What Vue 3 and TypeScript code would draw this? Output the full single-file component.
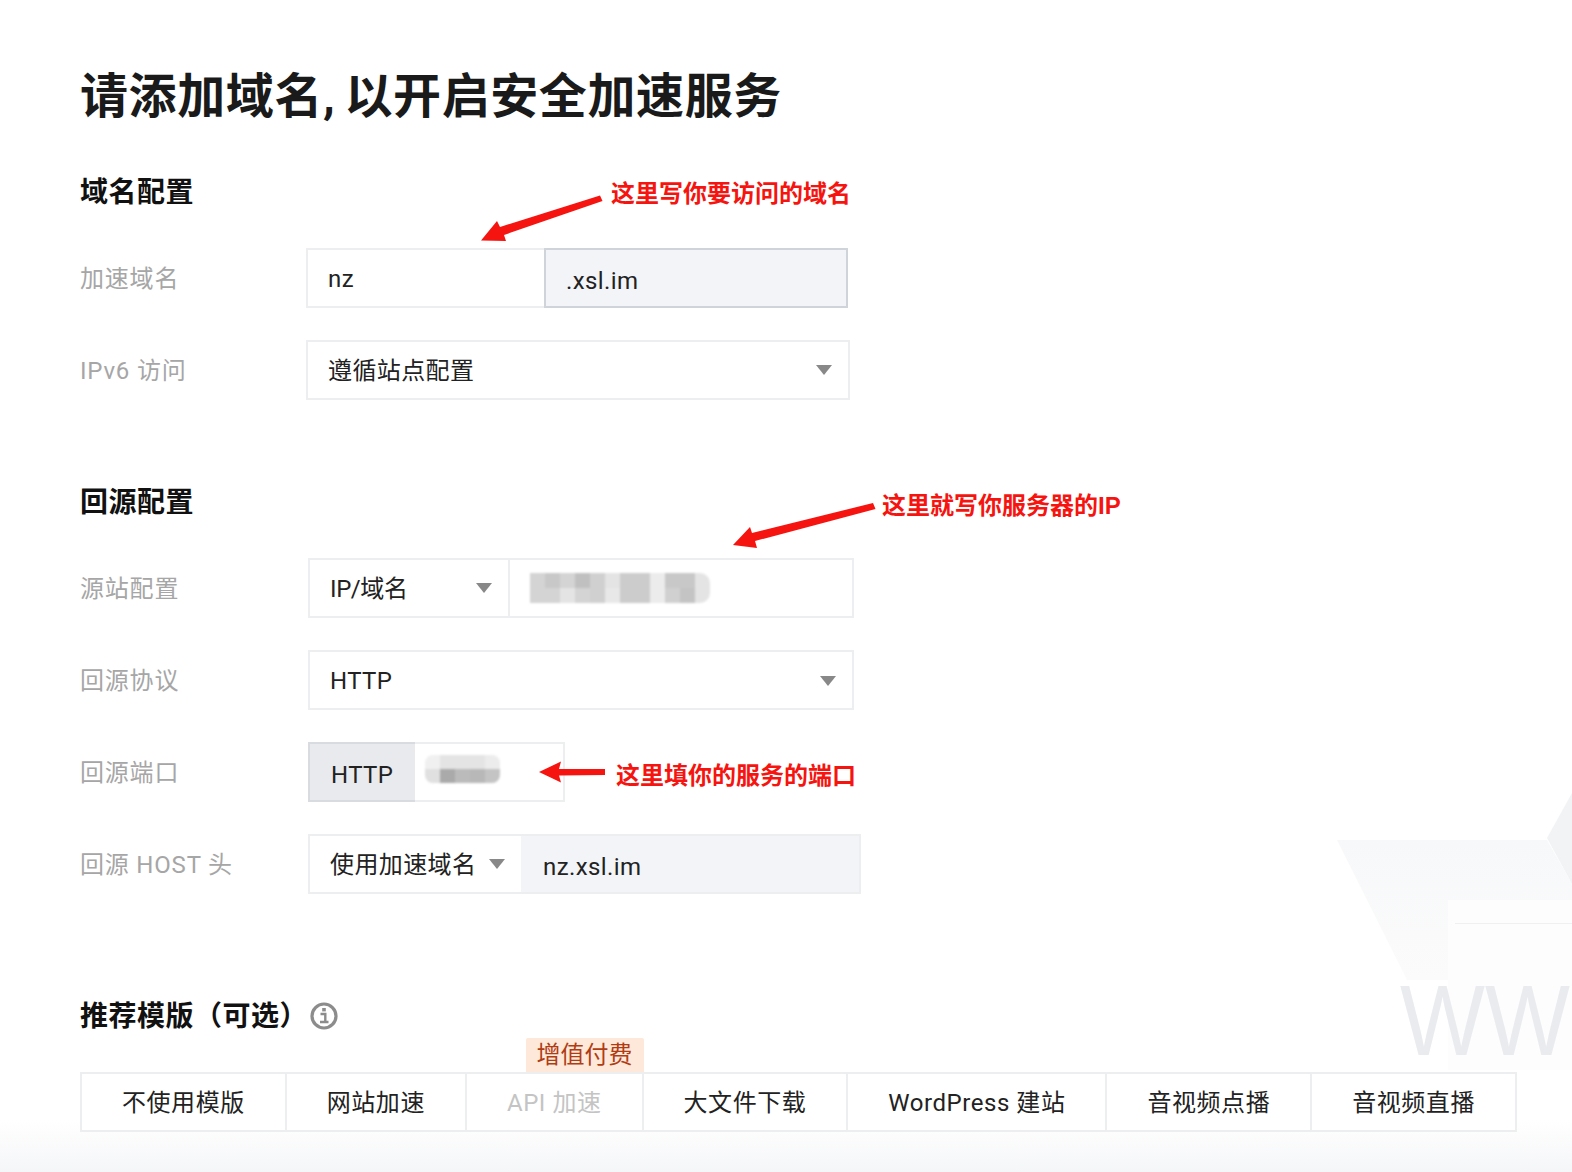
<script setup lang="ts">
interface Tab {
  label: string;
  disabled?: boolean;
  tag?: string;
}

const tabs: Tab[] = [
  { label: '不使用模版' },
  { label: '网站加速' },
  { label: 'API 加速', disabled: true, tag: '增值付费' },
  { label: '大文件下载' },
  { label: 'WordPress 建站' },
  { label: '音视频点播' },
  { label: '音视频直播' }
];

// pixelated host value, grey level per cell
const hostCells = [
  212, 200, 212, 192, 208, 228, 204, 204, 236, 200, 200, 228,
  212, 212, 228, 212, 208, 232, 204, 204, 236, 208, 196, 228
];
const portCells = [240, 228, 228, 228, 236, 224, 170, 187, 184, 196];

const cellColor = (v: number) => `rgb(${v}, ${v}, ${v})`;
</script>

<template>
  <div class="page">
    <svg class="backdrop" width="1572" height="1172" viewBox="0 0 1572 1172" aria-hidden="true">
      <defs>
        <linearGradient id="floor" x1="0" y1="0" x2="0" y2="1">
          <stop offset="0" stop-color="#f5f6f8" stop-opacity="0" />
          <stop offset="1" stop-color="#f5f6f8" />
        </linearGradient>
        <linearGradient id="fade" x1="0" y1="0" x2="0" y2="1">
          <stop offset="0" stop-color="#f7f8f9" />
          <stop offset="1" stop-color="#fbfbfc" />
        </linearGradient>
      </defs>
      <polygon points="1337,840 1547,840 1572,884 1572,980 1407,980" fill="url(#fade)" />
      <polygon points="1547,838 1572,793 1572,884" fill="#f2f3f5" />
      <rect x="1448" y="900" width="124" height="170" fill="#fdfdfe" />
      <rect x="1455" y="923" width="117" height="1" fill="#eef0f2" />
      <text class="www" transform="translate(1400 1055) scale(1 1.12)">WW</text>
      <rect x="0" y="1120" width="1572" height="52" fill="url(#floor)" />
    </svg>

    <main class="content">
      <h1 class="title">请添加域名, 以开启安全加速服务</h1>

      <section class="section">
        <h2 class="section-title">域名配置</h2>
        <div class="row">
          <label class="label">加速域名</label>
          <div class="field w-domain">
            <span class="cell grow-domain">nz</span>
            <span class="cell addon boxed">.xsl.im</span>
          </div>
        </div>
        <div class="row">
          <label class="label">IPv6 访问</label>
          <div class="field w-ipv6">
            <span class="cell select">遵循站点配置<i class="caret"></i></span>
          </div>
        </div>
      </section>

      <section class="section second">
        <h2 class="section-title">回源配置</h2>
        <div class="row">
          <label class="label">源站配置</label>
          <div class="field w-origin">
            <span class="cell select type-select">IP/域名<i class="caret"></i></span>
            <span class="cell mosaic-cell">
              <span class="mosaic host">
                <i v-for="(v, i) in hostCells" :key="i" :style="{ background: cellColor(v) }"></i>
              </span>
            </span>
          </div>
        </div>
        <div class="row">
          <label class="label">回源协议</label>
          <div class="field w-proto">
            <span class="cell select latin">HTTP<i class="caret"></i></span>
          </div>
        </div>
        <div class="row">
          <label class="label">回源端口</label>
          <div class="field w-port">
            <span class="cell prefix">HTTP</span>
            <span class="cell mosaic-cell port-cell">
              <span class="mosaic port">
                <i v-for="(v, i) in portCells" :key="i" :style="{ background: cellColor(v) }"></i>
              </span>
            </span>
          </div>
        </div>
        <div class="row">
          <label class="label">回源 HOST 头</label>
          <div class="field w-host">
            <span class="cell select host-select">使用加速域名<i class="caret"></i></span>
            <span class="cell addon host-value">nz.xsl.im</span>
          </div>
        </div>
      </section>

      <section class="section third">
        <h2 class="section-title">
          推荐模版（可选）
          <svg class="info" width="28" height="28" viewBox="0 0 28 28" aria-hidden="true">
            <circle cx="14" cy="14" r="12" fill="none" stroke="#8c8c8c" stroke-width="3.2" />
            <rect x="12.2" y="6" width="3.6" height="3.4" fill="#8c8c8c" />
            <path d="M10.5 12h4.8v7.5M10 20h8.5" fill="none" stroke="#8c8c8c" stroke-width="2.4" />
          </svg>
        </h2>
        <div class="tabs">
          <div v-for="tab in tabs" :key="tab.label" class="tab" :class="{ disabled: tab.disabled }">
            {{ tab.label }}
            <span v-if="tab.tag" class="tag">{{ tab.tag }}</span>
          </div>
        </div>
      </section>
    </main>

    <!-- red hand-drawn notes on top of the screenshot -->
    <div class="note note-domain">这里写你要访问的域名</div>
    <div class="note note-ip">这里就写你服务器的IP</div>
    <div class="note note-port">这里填你的服务的端口</div>
    <svg class="arrows" width="1572" height="1172" viewBox="0 0 1572 1172" aria-hidden="true">
      <path d="M600 195.5 L602.5 201 L504 235 L506 241 L481 240.5 L497 221 L500 227 Z" fill="#f5140f" />
      <path d="M873 503 L875.5 509 L755 541 L757 548 L733 545 L750 527 L752 533 Z" fill="#f5140f" />
      <path d="M605 769 V775 L559 775.5 L561 782.5 L539 772 L561 761.5 L559 769 Z" fill="#f5140f" />
    </svg>
  </div>
</template>

<style>
html,
body {
  margin: 0;
  background: #fff;
}
</style>

<style scoped>
.page {
  position: relative;
  width: 1572px;
  height: 1172px;
  overflow: hidden;
  background: #fff;
  color: #1f1f1f;
  font-family: Roboto, "Noto Sans CJK SC", sans-serif;
}

.backdrop,
.arrows {
  position: absolute;
  left: 0;
  top: 0;
}

.arrows {
  pointer-events: none;
}

.www {
  font-family: "Liberation Sans", sans-serif;
  font-size: 90px;
  fill: #e9ebee;
}

.content {
  position: relative;
  padding: 63px 57px 0 80px;
}

.title {
  margin: 0;
  font-size: 48px;
  line-height: 68px;
  font-weight: 700;
  color: #1a1a1a;
  letter-spacing: 0.6px;
  word-spacing: -3.5px;
}

.section {
  margin-top: 42px;
}

.section.second {
  margin-top: 83px;
}

.section.third {
  margin-top: 103px;
}

.section-title {
  display: flex;
  align-items: center;
  margin: 0 0 35px;
  font-size: 28px;
  line-height: 40px;
  font-weight: 700;
  letter-spacing: 0.5px;
  color: #111;
}

.info {
  margin: 0 0 3px 2px;
}

.row {
  display: flex;
  align-items: center;
  margin-bottom: 32px;
}

.row:last-child {
  margin-bottom: 0;
}

.label {
  width: 226px;
  flex: none;
  padding-bottom: 3px;
  font-size: 24px;
  letter-spacing: 0.8px;
  color: #a6a6a6;
}

.second .label {
  width: 228px;
}

.field {
  display: flex;
  box-sizing: border-box;
  height: 60px;
  border: 2px solid #eceef0;
  background: #fff;
  font-size: 24px;
  letter-spacing: 0.4px;
  color: #222;
}

.w-domain { width: 542px; }
.w-ipv6 { width: 544px; }
.w-origin { width: 546px; }
.w-proto { width: 546px; }
.w-port { width: 257px; }
.w-host { width: 553px; }

.cell {
  display: flex;
  align-items: center;
  box-sizing: border-box;
  padding: 0 20px;
}

.grow-domain {
  width: 236px;
  padding-top: 1px;
}

.addon {
  flex: 1;
  background: #f2f4f8;
  padding-top: 5px;
}

.host-value {
  padding-left: 22px;
}

.boxed {
  margin: -2px -2px -2px 0;
  border: 2px solid #cfd4da;
  padding-left: 20px;
}

.select {
  flex: 1;
  justify-content: space-between;
  padding-right: 16px;
  padding-bottom: 3px;
}

.latin {
  padding-top: 2px;
  padding-bottom: 0;
}

.type-select {
  flex: none;
  width: 200px;
  letter-spacing: -0.4px;
  border-right: 2px solid #eceef0;
}

.host-select {
  flex: none;
  width: 211px;
}

.caret {
  width: 0;
  height: 0;
  margin-top: 3px;
  border-left: 8px solid transparent;
  border-right: 8px solid transparent;
  border-top: 10px solid #888;
}

.latin .caret {
  margin-top: 0;
}

.prefix {
  width: 107px;
  margin: -2px 0 -2px -2px;
  padding-left: 21px;
  padding-top: 5px;
  background: #e8eaee;
  border: solid #d8dbe0;
  border-width: 2px 0 2px 2px;
}

.mosaic-cell {
  padding-left: 20px;
}

.port-cell {
  padding: 11px 0 0 10px;
  align-items: flex-start;
}

.mosaic {
  display: grid;
  filter: blur(0.8px);
}

.mosaic i {
  display: block;
}

.host {
  grid-template-columns: repeat(12, 15px);
  grid-auto-rows: 15px;
  border-radius: 0 10px 10px 0;
  overflow: hidden;
}

.port {
  grid-template-columns: repeat(5, 15px);
  grid-auto-rows: 14px;
  border-radius: 8px;
  overflow: hidden;
}

.tabs {
  display: flex;
  width: max-content;
  border: 2px solid #eceef0;
  background: #fff;
}

.tab {
  position: relative;
  box-sizing: border-box;
  height: 56px;
  padding: 0 40px;
  font-size: 24px;
  letter-spacing: 0.55px;
  line-height: 58px;
  color: #222;
  border-right: 2px solid #eceef0;
  white-space: nowrap;
}

.tab:last-child {
  border-right: 0;
}

.tab.disabled {
  color: #c4c4c4;
}

.tag {
  position: absolute;
  right: -2px;
  bottom: 100%;
  margin-bottom: 2px;
  height: 34px;
  padding: 0 11px;
  font-size: 24px;
  letter-spacing: 0;
  line-height: 34px;
  color: #b03c14;
  background: #fde8d9;
  border-radius: 2px 2px 0 0;
}

.note {
  position: absolute;
  font-size: 24px;
  line-height: 34px;
  font-weight: 700;
  color: #f5140f;
  font-family: "Liberation Sans", "Noto Sans CJK SC", sans-serif;
  white-space: nowrap;
}

.note-domain { left: 611px; top: 177px; }
.note-ip { left: 882px; top: 489px; }
.note-port { left: 616px; top: 759px; }
</style>
